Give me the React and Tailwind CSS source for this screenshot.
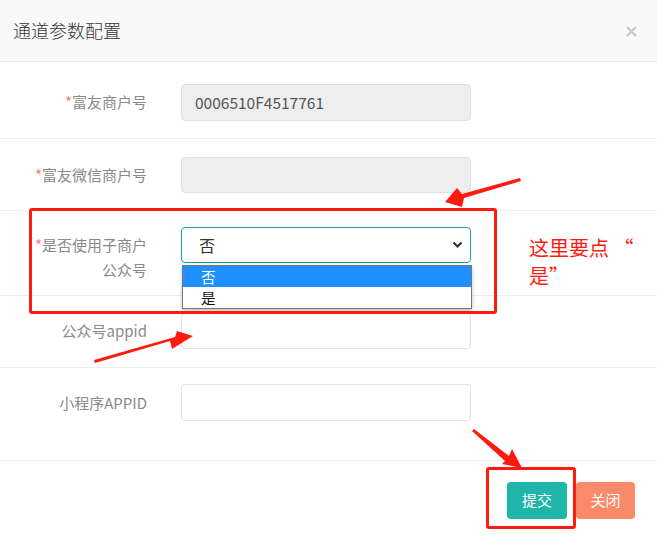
import React from "react";

const font = { fontFamily: '"Noto Sans CJK SC", "Noto Sans", sans-serif' };

function Row({ label, required, children, className = "", labelClass = "" }) {
  return (
    <div className={`flex border-b border-[#ececec] ${className}`}>
      <div className={`w-[147px] shrink-0 text-right text-[15px] text-[#8a8a8a] ${labelClass}`}>
        {required && <span className="text-[#f77]">*</span>}
        {label}
      </div>
      <div className="ml-[34px] w-[290px] relative">{children}</div>
    </div>
  );
}

export default function App() {
  return (
    <div className="relative w-[657px] h-[539px] bg-white overflow-hidden" style={font}>
      {/* header */}
      <div className="h-[62px] bg-[#f9f9f9] border-b border-[#e6e6e6] flex items-center justify-between pl-[13px] pr-[20px]">
        <div className="text-[18px] text-[#333] font-light">通道参数配置</div>
        <svg width="11" height="11" viewBox="0 0 11 11" className="mt-[1px]">
          <path d="M1 1L10 10M10 1L1 10" stroke="#c4c4c4" strokeWidth="1.8" />
        </svg>
      </div>

      {/* row 1 */}
      <Row label="富友商户号" required className="items-center pt-[22px] pb-[17px]">
        <div className="h-[37px] rounded-[4px] border border-[#e0e0e0] bg-[#eeeeee] flex items-center pl-[13px] text-[15.5px] text-[#555]">
          0006510F4517761
        </div>
      </Row>

      {/* row 2 */}
      <Row label="富友微信商户号" required className="items-center pt-[18px] pb-[17px]">
        <div className="h-[36px] rounded-[4px] border border-[#e0e0e0] bg-[#eeeeee]" />
      </Row>

      {/* row 3 */}
      <Row
        label={<>是否使用子商户<br />公众号</>}
        required
        className="items-start pt-[16px] h-[85px]"
        labelClass="pt-[5px] leading-[25px]"
      >
        <div className="h-[36px] rounded-[4px] border border-[#1a9ea6] bg-white flex items-center justify-between pl-[17px] pr-[7px] text-[16px] text-[#333]">
          <span>否</span>
          <svg width="11" height="8" viewBox="0 0 11 8">
            <path d="M1.5 1.5L5.5 5.5L9.5 1.5" fill="none" stroke="#333" strokeWidth="2.2" />
          </svg>
        </div>
      </Row>

      {/* row 4 */}
      <Row label="公众号appid" className="items-center pt-[17px] pb-[18px]">
        <div className="h-[36px] rounded-[4px] border border-[#e2e2e2] bg-white" />
      </Row>

      {/* row 5 */}
      <Row label="小程序APPID" className="items-start pt-[16px] h-[93px]" labelClass="pt-[8px] leading-[21px]">
        <div className="h-[37px] rounded-[4px] border border-[#e2e2e2] bg-white" />
      </Row>

      {/* footer */}
      <div className="flex justify-end gap-[9px] pt-[21px] pr-[22px]">
        <button className="w-[60px] h-[37px] rounded-[4px] bg-[#20b5aa] text-white text-[15px]">提交</button>
        <button className="w-[59px] h-[37px] rounded-[4px] bg-[#fa8a69] text-white text-[15px]">关闭</button>
      </div>

      {/* open dropdown list */}
      <div className="absolute left-[182px] top-[265px] w-[290px] border border-[#777] bg-white shadow-[0_2px_4px_rgba(0,0,0,0.25)] text-[14.5px]">
        <div className="h-[21px] bg-[#1e90ff] text-white pl-[18px] leading-[21px]">否</div>
        <div className="h-[21px] text-[#111] pl-[18px] leading-[21px]">是</div>
      </div>

      {/* annotations */}
      <div className="absolute left-[29px] top-[208px] w-[468px] h-[106px] border-[3px] border-[#ff1a10] rounded-[3px]" />
      <div className="absolute left-[486px] top-[467px] w-[90px] h-[62px] border-[3px] border-[#ff1a10] rounded-[3px]" />
      <div className="absolute left-[529px] top-[234px] text-[20px] leading-[28px] text-[#ff1a10]">
        这里要点 “<br />是”
      </div>

      <svg className="absolute left-0 top-0 pointer-events-none" width="657" height="539">
        <polygon points="520,178 462,194 457,188 445,202 462,207 464,198 521,181" fill="#ff1a10" />
        <polygon points="95,363 170,341 172,349 193,336 177,331 175,337 94,360" fill="#ff1a10" />
        <polygon points="472,431 505,461 502,464 522,468 512,449 509,456 474,429" fill="#ff1a10" />
      </svg>
    </div>
  );
}
